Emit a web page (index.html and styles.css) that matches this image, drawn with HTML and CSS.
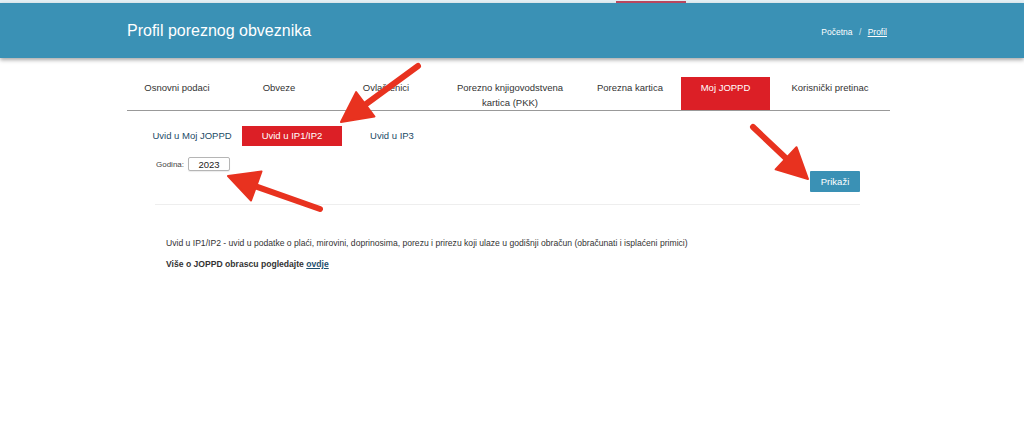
FILE: index.html
```html
<!DOCTYPE html>
<html lang="hr">
<head>
    <meta charset="UTF-8">
    <meta name="viewport" content="width=device-width, initial-scale=1.0">
    <title>Profil poreznog obveznika</title>
    <link rel="stylesheet" href="styles.css">
</head>
<body>
    <div class="topstrip"><span class="topstrip-mark"></span></div>
    <header class="header">
        <div class="container header-inner">
            <h1>Profil poreznog obveznika</h1>
            <nav class="breadcrumb">
                <a href="#" class="crumb">Početna</a>
                <span class="crumb-sep">/</span>
                <a href="#" class="crumb crumb-active">Profil</a>
            </nav>
        </div>
    </header>

    <div class="container">
        <ul class="tabs">
            <li class="tab">Osnovni podaci</li>
            <li class="tab">Obveze</li>
            <li class="tab">Ovlaštenici</li>
            <li class="tab">Porezno knjigovodstvena kartica (PKK)</li>
            <li class="tab">Porezna kartica</li>
            <li class="tab tab-active">Moj JOPPD</li>
            <li class="tab">Korisnički pretinac</li>
        </ul>

        <ul class="subtabs">
            <li class="subtab">Uvid u Moj JOPPD</li>
            <li class="subtab subtab-active">Uvid u IP1/IP2</li>
            <li class="subtab">Uvid u IP3</li>
        </ul>

        <form class="filter">
            <div class="filter-row">
                <label for="godina">Godina:</label>
                <input type="text" id="godina" value="2023">
            </div>
            <div class="filter-actions">
                <button type="button">Prikaži</button>
            </div>
        </form>
        <div class="separator"></div>

        <div class="info">
            <p>Uvid u IP1/IP2 - uvid u podatke o plaći, mirovini, doprinosima, porezu i prirezu koji ulaze u godišnji obračun (obračunati i isplaćeni primici)</p>
            <p class="info-more">Više o JOPPD obrascu pogledajte <a href="#">ovdje</a></p>
        </div>
    </div>

    <svg class="arrows" width="1024" height="425" viewBox="0 0 1024 425">
        <g class="arrow">
            <line x1="418" y1="66" x2="362" y2="107"/>
            <polygon points="341,122 374.5,116.5 356.1,92.1"/>
        </g>
        <g class="arrow">
            <line x1="320" y1="209" x2="252" y2="185"/>
            <polygon points="228,176 251,200.5 261.5,171.5"/>
        </g>
        <g class="arrow">
            <line x1="753" y1="127" x2="790" y2="162"/>
            <polygon points="808,179 796.5,147.2 775.6,169.4"/>
        </g>
    </svg>
</body>
</html>
```

FILE: styles.css
```css
body {
    margin: 0;
    font-family: "Liberation Sans", Arial, sans-serif;
    color: #333;
    background: #fff;
}
.container {
    width: 770px;
    margin: 0 auto;
}
.topstrip {
    height: 3px;
    background: #e4f0f5;
    display: flex;
}
.topstrip-mark {
    margin-left: 616px;
    margin-top: 1px;
    width: 70px;
    height: 2px;
    background: #b9475f;
}
.header {
    height: 55px;
    background: #3a91b5;
    box-shadow: 0 2px 4px rgba(0, 0, 0, 0.35);
}
.header-inner {
    height: 100%;
    display: flex;
    align-items: center;
    justify-content: space-between;
}
.header h1 {
    margin: 0;
    font-size: 16px;
    font-weight: normal;
    color: #fff;
}
.breadcrumb {
    margin-right: 10px;
    margin-top: 2px;
    font-size: 8.5px;
    color: #fff;
}
.crumb {
    color: #fff;
    text-decoration: none;
}
.crumb-active {
    text-decoration: underline;
}
.crumb-sep {
    padding: 0 4px;
    color: #cfe4ee;
}
.tabs {
    list-style: none;
    margin: 19px 0 0;
    padding: 0;
    width: 763px;
    display: grid;
    grid-template-columns: 100px 104px 110px 138px 102px 89px 120px;
    border-bottom: 1px solid #999;
}
.tab {
    padding: 3px 8px 0;
    min-height: 30px;
    font-size: 9.5px;
    line-height: 15px;
    text-align: center;
    color: #333;
}
.tab-active {
    background: #dc1f26;
    color: #fff;
}
.subtabs {
    list-style: none;
    margin: 15px 0 0 15px;
    padding: 0;
    display: flex;
}
.subtab {
    width: 100px;
    height: 20px;
    line-height: 20px;
    text-align: center;
    font-size: 9.5px;
    color: #1b4a66;
}
.subtab-active {
    background: #dc1f26;
    color: #fff;
}
.filter {
    margin: 11px 0 0;
    padding-left: 29px;
}
.filter-row {
    display: flex;
    align-items: center;
    gap: 4px;
}
.filter-row label {
    font-size: 8px;
    color: #444;
}
.filter-row input {
    width: 40px;
    height: 12px;
    padding: 0;
    border: 1px solid #b5b5b5;
    border-radius: 2px;
    box-shadow: 0 1px 1px rgba(0, 0, 0, 0.08);
    font-family: inherit;
    font-size: 9.5px;
    text-align: center;
    color: #222;
}
.filter-actions {
    display: flex;
    justify-content: flex-end;
    margin-right: 37px;
}
.filter-actions button {
    width: 50px;
    height: 21px;
    border: none;
    border-radius: 1px;
    background: #3a91b5;
    color: #fff;
    font-family: inherit;
    font-size: 9.5px;
}
.separator {
    margin: 12px 37px 0 28px;
    border-top: 1px solid #eee;
}
.info {
    padding-left: 39px;
    margin-top: 33px;
    font-size: 8.6px;
    color: #333;
}
.info p {
    margin: 0 0 11px;
}
.info-more {
    font-weight: bold;
}
.info-more a {
    color: #1e4f6e;
}
.arrows {
    position: absolute;
    top: 0;
    left: 0;
    pointer-events: none;
}
.arrow line {
    stroke: #e8321f;
    stroke-width: 6;
    stroke-linecap: round;
}
.arrow polygon {
    fill: #e8321f;
    stroke: #e8321f;
    stroke-width: 2;
    stroke-linejoin: round;
}
```
